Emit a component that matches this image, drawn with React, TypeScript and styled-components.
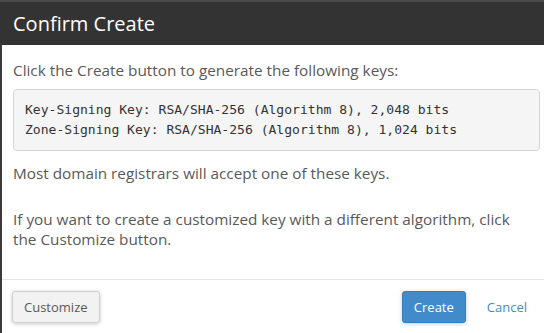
import React from "react";
import styled, { createGlobalStyle } from "styled-components";

const Global = createGlobalStyle`
  html, body { margin: 0; padding: 0; background: #fff; }
  body { font-family: "Open Sans", "Liberation Sans", sans-serif; }
  * { box-sizing: border-box; }
`;

const Modal = styled.div`
  width: 544px;
  height: 333px;
  display: flex;
  flex-direction: column;
  overflow: hidden;
  background: #fff;
`;

const Header = styled.div`
  height: 45px;
  flex: none;
  display: flex;
  align-items: center;
  padding-left: 13px;
  background: #333;
  border-top: 2px solid #4a4a4a;
  color: #fff;
  font-size: 20px;
  font-weight: 400;
`;

const Body = styled.div`
  flex: 1;
  display: flex;
  flex-direction: column;
  border-left: 2px solid #3a3a3a;
  min-height: 0;
`;

const Content = styled.div`
  padding: 15px 4px 0 11px;
  color: #595959;
  font-size: 15.3px;
  line-height: 20px;
  height: 235px;
  border-bottom: 1px solid #e5e5e5;
`;

const Para = styled.p<{ $top?: number }>`
  margin: ${(p) => p.$top ?? 0}px 24px 0 0;
`;

const Pre = styled.pre`
  margin: 9px 0 0;
  padding: 10px 11px 10px 11px;
  background: #f5f5f5;
  border: 1px solid #d5d5d5;
  border-radius: 4px;
  font-family: "DejaVu Sans Mono", "Liberation Mono", monospace;
  font-size: 13.05px;
  line-height: 20px;
  color: #333;
  white-space: pre;
`;

const Footer = styled.div`
  display: flex;
  align-items: center;
  padding: 11px 0 0 10px;
`;

const Button = styled.button<{ $primary?: boolean }>`
  height: 32px;
  padding: 0 11px;
  font-family: "Open Sans", "Liberation Sans", sans-serif;
  font-size: 13px;
  border-radius: 3px;
  border: 1px solid ${(p) => (p.$primary ? "#357ebd" : "#cfcfcf")};
  background: ${(p) => (p.$primary ? "#428bca" : "#f2f2f2")};
  color: ${(p) => (p.$primary ? "#fff" : "#595959")};
  box-shadow: 0 1px 4px rgba(0, 0, 0, 0.2);
  cursor: pointer;
`;

const Spacer = styled.div`
  flex: 1;
`;

const LinkButton = styled.button`
  height: 32px;
  margin: 0 17px 0 21px;
  padding: 0;
  border: none;
  background: none;
  font-family: "Open Sans", "Liberation Sans", sans-serif;
  font-size: 13px;
  color: #428bca;
  cursor: pointer;
`;

export default function App() {
  return (
    <>
      <Global />
      <Modal>
        <Header>Confirm Create</Header>
        <Body>
          <Content>
            <Para>Click the Create button to generate the following keys:</Para>
            <Pre>
              {"Key-Signing Key: RSA/SHA-256 (Algorithm 8), 2,048 bits\nZone-Signing Key: RSA/SHA-256 (Algorithm 8), 1,024 bits"}
            </Pre>
            <Para $top={12}>Most domain registrars will accept one of these keys.</Para>
            <Para $top={26}>
              If you want to create a customized key with a different algorithm, click the Customize
              button.
            </Para>
          </Content>
          <Footer>
            <Button>Customize</Button>
            <Spacer />
            <Button $primary>Create</Button>
            <LinkButton>Cancel</LinkButton>
          </Footer>
        </Body>
      </Modal>
    </>
  );
}
